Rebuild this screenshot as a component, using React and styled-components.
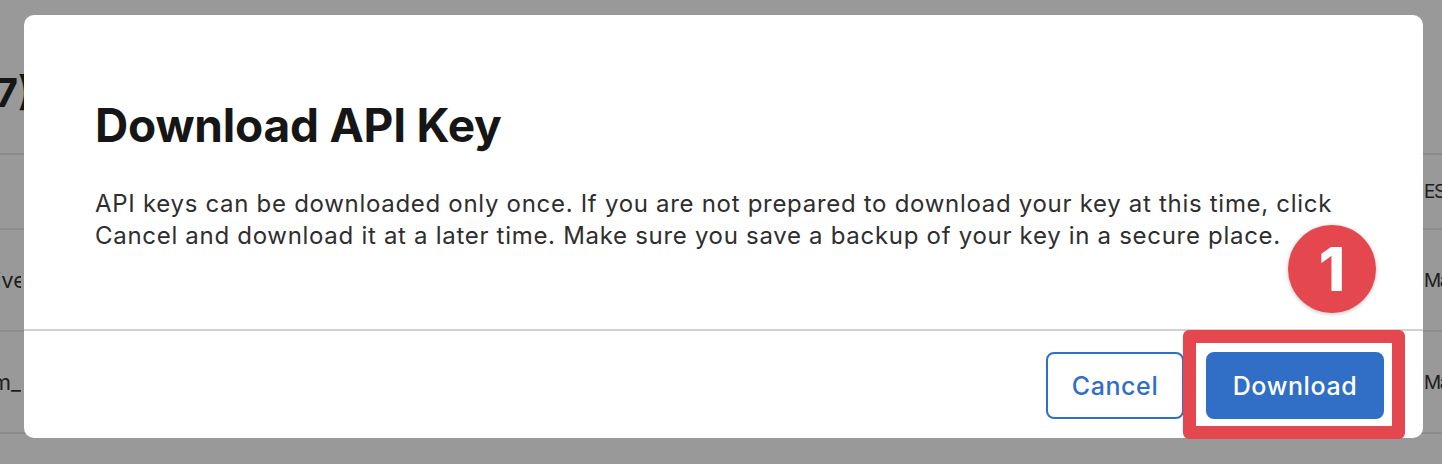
import styled, { createGlobalStyle } from "styled-components";

const GlobalStyle = createGlobalStyle`
  html, body {
    margin: 0;
    padding: 0;
  }
  body {
    font-family: Inter, "Noto Sans", "Liberation Sans", sans-serif;
    -webkit-font-smoothing: antialiased;
  }
`;

const Screen = styled.div`
  position: relative;
  width: 1442px;
  height: 464px;
  overflow: hidden;
  background-color: #999999;
`;

// page behind the dim overlay
const BgHeading = styled.div`
  height: 153px;
  box-sizing: border-box;
  padding-top: 68px;
  margin-left: -203px;
  font-size: 40px;
  font-weight: 700;
  color: #161616;
  white-space: nowrap;
`;

const BgRow = styled.div`
  height: ${(props) => props.h}px;
  border-top: 2px solid #8b8b8b;
  box-sizing: border-box;
  display: flex;
  align-items: center;
  font-size: 22px;
  color: #1e1e1e;
  white-space: nowrap;
`;

const BgLeft = styled.div`
  width: 60px;
  margin-left: -39px;
  text-align: right;
  overflow: hidden;
`;

const BgRight = styled.div`
  position: absolute;
  left: 1424px;
  font-size: 19px;
  letter-spacing: -1.5px;
  white-space: nowrap;
`;

const Modal = styled.div`
  position: absolute;
  left: 24px;
  top: 15px;
  width: 1399px;
  height: 423px;
  background: #ffffff;
  border-radius: 10px;
  display: flex;
  flex-direction: column;
`;

const Body = styled.div`
  padding: 82px 71px 0 71px;
  height: 316px;
  box-sizing: border-box;
  border-bottom: 2px solid #d2d2d2;
`;

const Title = styled.h1`
  margin: 0;
  font-size: 46px;
  line-height: 56px;
  font-weight: 700;
  color: #161616;
  letter-spacing: -0.2px;
`;

const Text = styled.p`
  margin: 35px 0 0 0;
  font-size: 24px;
  line-height: 32px;
  letter-spacing: 0.7px;
  color: #2e2e2e;
  width: fit-content;
  max-width: 1250px;
`;

const Footer = styled.div`
  flex: 1;
  display: flex;
  justify-content: flex-end;
  align-items: flex-start;
  gap: 22px;
  padding: 21px 39px 0 0;
`;

const Button = styled.button`
  height: 67px;
  width: ${(props) => (props.primary ? "178px" : "138px")};
  padding: 0;
  border-radius: 8px;
  font-family: inherit;
  font-size: 25px;
  letter-spacing: 0.6px;
  font-weight: 500;
  cursor: pointer;
  border: 2px solid #2f6fc6;
  background: ${(props) => (props.primary ? "#306fc5" : "#ffffff")};
  color: ${(props) => (props.primary ? "#ffffff" : "#2f6fc6")};
`;

const Highlight = styled.div`
  position: absolute;
  left: 1183px;
  top: 330px;
  width: 222px;
  height: 109px;
  box-sizing: border-box;
  border: 13px solid #e4484e;
  border-radius: 6px;
`;

const Badge = styled.div`
  position: absolute;
  left: 1288px;
  top: 225px;
  width: 88px;
  height: 88px;
  border-radius: 50%;
  background: #e4484e;
  box-shadow: 0 1px 4px rgba(0, 0, 0, 0.25);
  display: flex;
  align-items: center;
  justify-content: center;
  color: #ffffff;
  font-size: 60px;
  font-weight: 800;
`;

export default function App() {
  const rows = [
    { h: 75, left: "", right: "ES" },
    { h: 102, left: "Active", right: "Ma" },
    { h: 102, left: "m_", right: "Ma" },
    { h: 40, left: "", right: "" },
  ];

  return (
    <>
      <GlobalStyle />
      <Screen>
        <BgHeading>API Keys (7)</BgHeading>
        {rows.map((r, i) => (
          <BgRow key={i} h={r.h}>
            <BgLeft>{r.left}</BgLeft>
            <BgRight>{r.right}</BgRight>
          </BgRow>
        ))}
        <Modal>
          <Body>
            <Title>Download API Key</Title>
            <Text>
              API keys can be downloaded only once. If you are not prepared to
              download your key at this time, click Cancel and download it at a
              later time. Make sure you save a backup of your key in a secure
              place.
            </Text>
          </Body>
          <Footer>
            <Button>Cancel</Button>
            <Button primary>Download</Button>
          </Footer>
        </Modal>
        <Highlight />
        <Badge>1</Badge>
      </Screen>
    </>
  );
}
